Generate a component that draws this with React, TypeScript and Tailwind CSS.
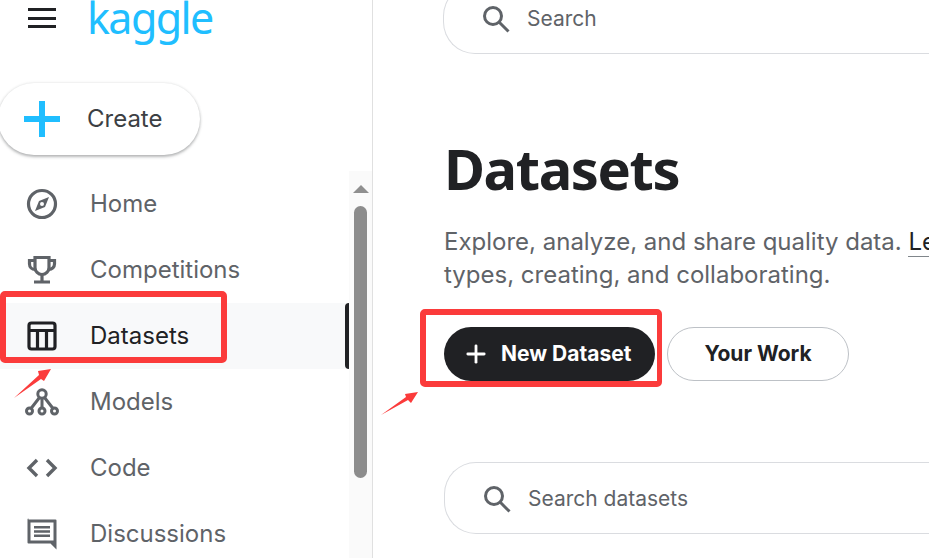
import { Plus } from "lucide-react";

const navItems = [
  { label: "Home", icon: "home" },
  { label: "Competitions", icon: "trophy" },
  { label: "Datasets", icon: "table", active: true },
  { label: "Models", icon: "models" },
  { label: "Code", icon: "code" },
  { label: "Discussions", icon: "comment" },
];

function NavIcon({ name, active }: { name: string; active?: boolean }) {
  const color = active ? "#202124" : "#5f6368";
  if (name === "home") {
    return (
      <svg width="32" height="32" viewBox="0 0 32 32" fill="none">
        <circle cx="16" cy="16" r="13.5" stroke={color} strokeWidth="3.2" />
        <path d="M23 9l-4 10-10 4 4-10z" fill={color} />
        <circle cx="16" cy="16" r="2" fill="#fff" />
      </svg>
    );
  }
  if (name === "trophy") {
    return (
      <svg width="32" height="32" viewBox="0 0 32 32" fill="none" stroke={color} strokeWidth="3.2">
        <path d="M9 3.5h14v10a7 7 0 0 1-14 0z" />
        <path d="M9 6.5H3.5v3.5a5.5 5.5 0 0 0 5.5 5.5M23 6.5h5.5v3.5a5.5 5.5 0 0 1-5.5 5.5" />
        <path d="M16 20v7M8 28h16" />
      </svg>
    );
  }
  if (name === "table") {
    return (
      <svg width="32" height="32" viewBox="0 0 32 32" fill="none" stroke={color} strokeWidth="3.2">
        <rect x="3" y="3" width="26" height="26" rx="2.5" />
        <path d="M3 10.5h26M11.5 10.5V29M20.5 10.5V29" />
      </svg>
    );
  }
  if (name === "models") {
    return (
      <svg width="34" height="28" viewBox="0 0 34 28" fill="none" stroke={color} strokeWidth="3">
        <circle cx="17" cy="6" r="4.2" />
        <circle cx="4.5" cy="23" r="3" />
        <circle cx="17" cy="23" r="3" />
        <circle cx="29.5" cy="23" r="3" />
        <path d="M14.5 9.5L6 20.5M17 10.5V20M19.5 9.5L28 20.5" />
      </svg>
    );
  }
  if (name === "code") {
    return (
      <svg width="32" height="20" viewBox="0 0 32 20" fill="none" stroke={color} strokeWidth="3.4">
        <path d="M11 2L3 10l8 8M21 2l8 8-8 8" />
      </svg>
    );
  }
  return (
    <svg width="32" height="32" viewBox="0 0 32 32" fill="none">
      <path d="M2.5 1.5h27a1 1 0 0 1 1 1v29l-6-6h-22a1 1 0 0 1-1-1v-23a1 1 0 0 1 1-1z" fill={color} />
      <rect x="4.5" y="4.5" width="23" height="18" fill="#fff" />
      <path d="M8 8h16v2.5H8zM8 12.2h16v2.5H8zM8 16.4h16v2.5H8z" fill={color} />
    </svg>
  );
}

function SearchIcon() {
  return (
    <svg width="28" height="28" viewBox="0 0 28 28" fill="none" stroke="#5f6368" strokeWidth="3">
      <circle cx="11" cy="11" r="8.5" />
      <path d="M17 17L26.5 26.5" />
    </svg>
  );
}

function SearchBox({ label, className }: { label: string; className: string }) {
  return (
    <div className={`flex items-center rounded-l-[32px] border border-r-0 border-[#dadce0] bg-white ${className}`}>
      <div className="ml-[38px] shrink-0">
        <SearchIcon />
      </div>
      <span className="ml-[17px] text-[21px] text-[#5f6368]">{label}</span>
    </div>
  );
}

export default function App() {
  return (
    <div className="flex h-[558px] w-[929px] overflow-hidden bg-white font-['Inter',sans-serif]">
      <aside className="relative flex w-[373px] shrink-0 flex-col border-r border-[#e0e0e0]">
        <header className="flex h-[83px] shrink-0 items-start">
          <div className="ml-[28px] mt-[8px] flex h-[20px] w-[28px] flex-col justify-between">
            <div className="h-[3px] bg-[#202124]" />
            <div className="h-[3px] bg-[#202124]" />
            <div className="h-[3px] bg-[#202124]" />
          </div>
          <span className="ml-[31px] mt-[-20px] font-['Noto_Sans',sans-serif] text-[43px] leading-[76px] tracking-[-1.6px] text-[#20beff]">
            kaggle
          </span>
        </header>

        <button className="ml-[-2px] flex h-[72px] w-[202px] shrink-0 items-center rounded-full bg-white shadow-[0_2px_3px_rgba(60,64,67,0.35),0_0_3px_rgba(60,64,67,0.15)]">
          <svg className="ml-[26px] shrink-0" width="36" height="36" viewBox="0 0 36 36" fill="#20beff">
            <path d="M15 0h6v15h15v6H21v15h-6V21H0v-6h15z" />
          </svg>
          <span className="ml-[27px] text-[24px] text-[#3c4043]">Create</span>
        </button>

        <nav className="mt-[16px] flex flex-col">
          {navItems.map((item) => (
            <div
              key={item.label}
              className={`flex h-[66px] w-[349px] shrink-0 items-center ${item.active ? "bg-[#f8f9fa]" : ""}`}
            >
              <div className="ml-[24px] flex w-[36px] justify-center">
                <NavIcon name={item.icon} active={item.active} />
              </div>
              <span className={`ml-[30px] text-[24px] ${item.active ? "text-[#202124]" : "text-[#5f6368]"}`}>
                {item.label}
              </span>
              {item.active && <div className="ml-auto h-[66px] w-[4px] rounded-l-sm bg-[#202124]" />}
            </div>
          ))}
        </nav>

        <div className="absolute right-0 top-[171px] flex h-[387px] w-[23px] flex-col items-center bg-[#fafafa]">
          <div className="mt-[14px] h-0 w-0 border-x-[8px] border-b-[8px] border-x-transparent border-b-[#8f8f8f]" />
          <div className="mt-[13px] h-[272px] w-[13px] rounded-full bg-[#8c8c8c]" />
        </div>

        <div className="absolute left-0 top-[291px] h-[72px] w-[227px] rounded-[5px] border-[6px] border-[#fb3b3b]" />
        <svg className="absolute left-[13px] top-[368px]" width="40" height="32" viewBox="0 0 40 32">
          <path d="M1 30L26 7 25 3 38 1 31 13 28 11z" fill="#fb3b3b" />
        </svg>
      </aside>

      <main className="relative flex-1">
        <SearchBox label="Search" className="ml-[70px] mt-[-16px] h-[70px]" />
        <h1 className="ml-[71px] mt-[79px] font-['Noto_Sans',sans-serif] text-[56px] font-bold leading-[70px] tracking-[-1.4px] text-[#202124]">
          Datasets
        </h1>
        <p className="ml-[71px] mt-[22px] whitespace-nowrap text-[24px] leading-[33px] text-[#5f6368]">
          Explore, analyze, and share quality data. <span className="border-b border-[#80868b] text-[#202124]">Learn more</span>
          <br />
          types, creating, and collaborating.
        </p>
        <div className="ml-[71px] mt-[36px] flex gap-[12px]">
          <button className="flex h-[54px] w-[211px] items-center rounded-full bg-[#202124] text-white">
            <Plus size={28} strokeWidth={2.4} className="ml-[18px]" />
            <span className="ml-[11px] text-[21px] font-bold">New Dataset</span>
          </button>
          <button className="h-[54px] w-[182px] rounded-full border border-[#bdc1c6] bg-white text-[21px] font-bold text-[#202124]">
            Your Work
          </button>
        </div>
        <SearchBox label="Search datasets" className="ml-[71px] mt-[81px] h-[72px] pt-[2px]" />

        <div className="absolute left-[47px] top-[309px] h-[78px] w-[242px] rounded-[5px] border-[6px] border-r-[5px] border-[#fb3b3b]" />
        <svg className="absolute left-[8px] top-[390px]" width="38" height="26" viewBox="0 0 38 26">
          <path d="M0 25L25 7 24 4 37 2 30 13 27 10z" fill="#fb3b3b" />
        </svg>
      </main>
    </div>
  );
}
